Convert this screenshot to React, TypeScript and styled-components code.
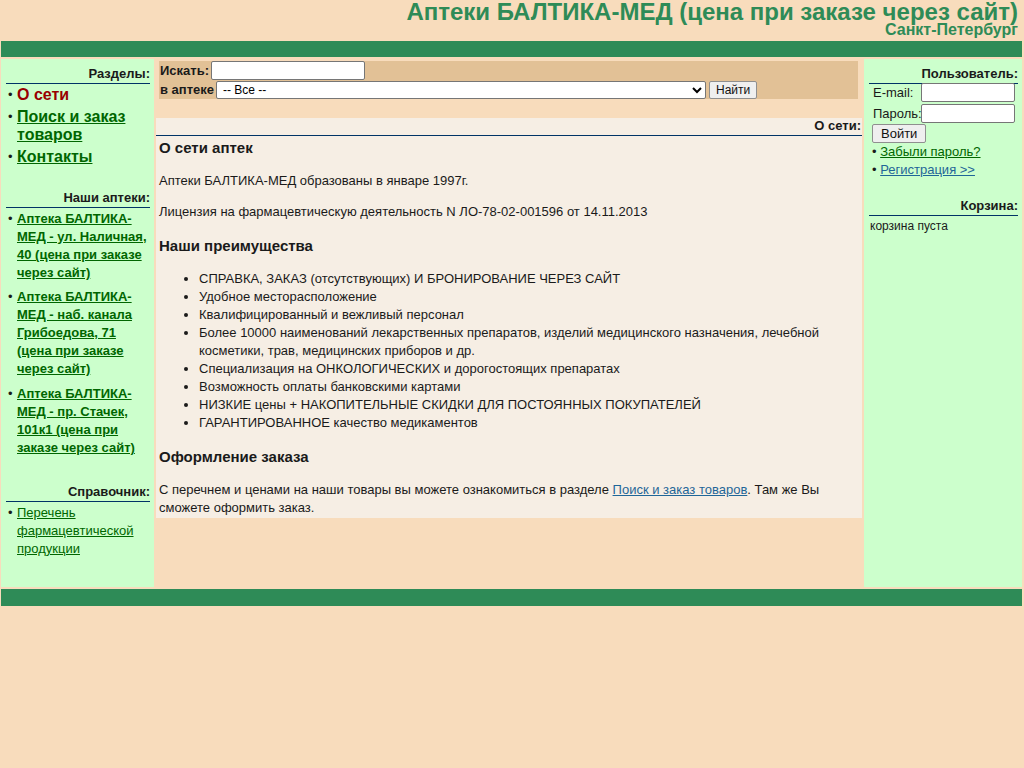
import React from "react";
import styled, { createGlobalStyle } from "styled-components";

const GlobalStyle = createGlobalStyle`
  body {
    margin: 0;
    background: #f8dcbc;
    font-family: "Liberation Sans", Arial, sans-serif;
    font-size: 13px;
    color: #1a1a1a;
  }
`;

const Header = styled.header`
  text-align: right;
  padding: 0 6px 0 0;
  height: 41px;
`;

const Title = styled.h1`
  margin: 0;
  font-size: 24px;
  line-height: 24px;
  color: #2e8b57;
  font-family: "Liberation Sans Narrow", "Arial Narrow", "Liberation Sans", sans-serif;
`;

const City = styled.div`
  margin-top: -2px;
  font-size: 16px;
  line-height: 16px;
  font-weight: bold;
  color: #2e8b57;
  font-family: "Liberation Sans Narrow", "Arial Narrow", "Liberation Sans", sans-serif;
`;

const Bar = styled.div`
  height: 16px;
  margin: 0 2px 0 1px;
  background: #2e8b57;
`;

const Columns = styled.div`
  display: flex;
  gap: 2px;
  margin: 2px 2px 2px 1px;
  height: 528px;
`;

const Side = styled.aside<{ $width: number }>`
  width: ${(p) => p.$width}px;
  flex: none;
  background: #ccffcc;
  padding: 7px 4px 0 5px;
  box-sizing: border-box;
`;

const Middle = styled.main`
  flex: 1;
  display: flex;
  flex-direction: column;
`;

const BoxHead = styled.div<{ $gap?: number }>`
  text-align: right;
  font-weight: bold;
  font-size: 13px;
  line-height: 15px;
  padding-bottom: 2px;
  border-bottom: 1px solid #003366;
  margin-top: ${(p) => p.$gap || 0}px;
`;

const NavList = styled.ul`
  list-style: none;
  margin: 0;
  padding: 0;
`;

const NavItem = styled.li<{ $big?: boolean; $space: number }>`
  position: relative;
  padding-left: 11px;
  font-size: ${(p) => (p.$big ? 16 : 13)}px;
  line-height: 18px;
  margin-top: ${(p) => p.$space}px;
  &::before {
    content: "•";
    position: absolute;
    left: 2px;
    top: 0;
    font-size: 13px;
    color: #1a1a1a;
    font-weight: normal;
  }
`;

const NavLink = styled.a<{ $active?: boolean; $bold?: boolean }>`
  color: ${(p) => (p.$active ? "#990000" : "#006600")};
  font-weight: ${(p) => (p.$bold ? "bold" : "normal")};
  text-decoration: ${(p) => (p.$active ? "none" : "underline")};
  cursor: pointer;
`;

const SearchWrap = styled.div`
  padding: 2px 4px 19px 3px;
`;

const SearchBox = styled.form`
  background: #e2c196;
  height: 38px;
  font-weight: bold;
  font-size: 13px;
`;

const SearchRow = styled.div`
  display: flex;
  align-items: center;
  gap: 2px;
  height: 19px;
  padding-left: 1px;
`;

const TextInput = styled.input<{ $width: number }>`
  width: ${(p) => p.$width}px;
  height: 19px;
  box-sizing: border-box;
  border: 1px solid #767676;
  border-radius: 2px;
  background: #fff;
  padding: 0 2px;
  margin: 0;
`;

const Select = styled.select`
  width: 490px;
  height: 18px;
  box-sizing: border-box;
  font-size: 12px;
  font-family: "Liberation Sans", Arial, sans-serif;
  border: 1px solid #767676;
  border-radius: 2px;
  background: #fff;
  margin: 0;
  padding: 0 2px;
`;

const Button = styled.button`
  font-family: "Liberation Sans", Arial, sans-serif;
  font-size: 12px;
  height: 18px;
  padding: 0 6px;
  border: 1px solid #8f8f8f;
  border-radius: 2px;
  background: #efefef;
  color: #111;
  margin-left: 1px;
`;

const Content = styled.section`
  background: #f6eee4;
`;

const ContentHead = styled(BoxHead)`
  padding: 0 1px 2px 0;
`;

const Body = styled.div`
  padding: 3px 3px 1px 3px;
  line-height: 18px;
`;

const H = styled.h3<{ $top: number }>`
  margin: ${(p) => p.$top}px 0 15px 0;
  font-size: 15px;
  line-height: 18px;
`;

const P = styled.p`
  margin: 0 0 13px 0;
`;

const Ul = styled.ul`
  margin: 0;
  padding-left: 40px;
  list-style: disc;
`;

const BlueLink = styled.a`
  color: #1f6698;
  text-decoration: underline;
  cursor: pointer;
`;

const LoginGrid = styled.div`
  display: grid;
  grid-template-columns: 48px 94px;
  row-gap: 2px;
  align-items: center;
  padding-left: 4px;
  margin-top: -1px;
`;

const Label = styled.label`
  font-size: 13px;
`;

const LoginButton = styled(Button)`
  height: 19px;
  font-size: 13px;
  padding: 0 8px;
  margin: 1px 0 0 3px;
`;

const SmallList = styled.ul`
  list-style: none;
  margin: 0;
  padding: 0 0 0 3px;
  line-height: 18px;
`;

const Empty = styled.div`
  padding: 1px 0 0 1px;
  font-size: 12px;
  line-height: 18px;
`;

const FooterBar = styled(Bar)`
  height: 17px;
`;

const pharmacies = [
  "Аптека БАЛТИКА-МЕД - ул. Наличная, 40 (цена при заказе через сайт)",
  "Аптека БАЛТИКА-МЕД - наб. канала Грибоедова, 71 (цена при заказе через сайт)",
  "Аптека БАЛТИКА-МЕД - пр. Стачек, 101к1 (цена при заказе через сайт)",
];

const perks = [
  "СПРАВКА, ЗАКАЗ (отсутствующих) И БРОНИРОВАНИЕ ЧЕРЕЗ САЙТ",
  "Удобное месторасположение",
  "Квалифицированный и вежливый персонал",
  "Более 10000 наименований лекарственных препаратов, изделий медицинского назначения, лечебной косметики, трав, медицинских приборов и др.",
  "Специализация на ОНКОЛОГИЧЕСКИХ и дорогостоящих препаратах",
  "Возможность оплаты банковскими картами",
  "НИЗКИЕ цены + НАКОПИТЕЛЬНЫЕ СКИДКИ ДЛЯ ПОСТОЯННЫХ ПОКУПАТЕЛЕЙ",
  "ГАРАНТИРОВАННОЕ качество медикаментов",
];

export default function App() {
  return (
    <>
      <GlobalStyle />
      <Header>
        <Title>Аптеки БАЛТИКА-МЕД (цена при заказе через сайт)</Title>
        <City>Санкт-Петербург</City>
      </Header>
      <Bar />
      <Columns>
        <Side $width={153}>
          <BoxHead>Разделы:</BoxHead>
          <NavList>
            <NavItem $big $space={2}>
              <NavLink $active $bold>О сети</NavLink>
            </NavItem>
            <NavItem $big $space={4}>
              <NavLink $bold>Поиск и заказ товаров</NavLink>
            </NavItem>
            <NavItem $big $space={4}>
              <NavLink $bold>Контакты</NavLink>
            </NavItem>
          </NavList>
          <BoxHead $gap={24}>Наши аптеки:</BoxHead>
          <NavList>
            {pharmacies.map((name, i) => (
              <NavItem key={name} $space={i === 0 ? 2 : i === 1 ? 6 : 7}>
                <NavLink $bold>{name}</NavLink>
              </NavItem>
            ))}
          </NavList>
          <BoxHead $gap={27}>Справочник:</BoxHead>
          <NavList>
            <NavItem $space={2}>
              <NavLink>Перечень фармацевтической продукции</NavLink>
            </NavItem>
          </NavList>
        </Side>
        <Middle>
          <SearchWrap>
            <SearchBox>
              <SearchRow>
                Искать: <TextInput $width={154} />
              </SearchRow>
              <SearchRow>
                в аптеке
                <Select defaultValue="all">
                  <option value="all">-- Все --</option>
                </Select>
                <Button type="button">Найти</Button>
              </SearchRow>
            </SearchBox>
          </SearchWrap>
          <Content>
            <ContentHead>О сети:</ContentHead>
            <Body>
              <H $top={0}>О сети аптек</H>
              <P>Аптеки БАЛТИКА-МЕД образованы в январе 1997г.</P>
              <P>Лицензия на фармацевтическую деятельность N ЛО-78-02-001596 от 14.11.2013</P>
              <H $top={16}>Наши преимущества</H>
              <Ul>
                {perks.map((t) => (
                  <li key={t}>{t}</li>
                ))}
              </Ul>
              <H $top={16}>Оформление заказа</H>
              <P style={{ marginBottom: 0 }}>
                С перечнем и ценами на наши товары вы можете ознакомиться в разделе{" "}
                <BlueLink>Поиск и заказ товаров</BlueLink>. Там же Вы сможете оформить заказ.
              </P>
            </Body>
          </Content>
        </Middle>
        <Side $width={158}>
          <BoxHead>Пользователь:</BoxHead>
          <LoginGrid>
            <Label>E-mail:</Label>
            <TextInput $width={94} />
            <Label>Пароль:</Label>
            <TextInput $width={94} type="password" />
          </LoginGrid>
          <LoginButton type="button">Войти</LoginButton>
          <SmallList>
            <li>
              • <NavLink>Забыли пароль?</NavLink>
            </li>
            <li>
              • <BlueLink>Регистрация &gt;&gt;</BlueLink>
            </li>
          </SmallList>
          <BoxHead $gap={19}>Корзина:</BoxHead>
          <Empty>корзина пуста</Empty>
        </Side>
      </Columns>
      <FooterBar />
    </>
  );
}
